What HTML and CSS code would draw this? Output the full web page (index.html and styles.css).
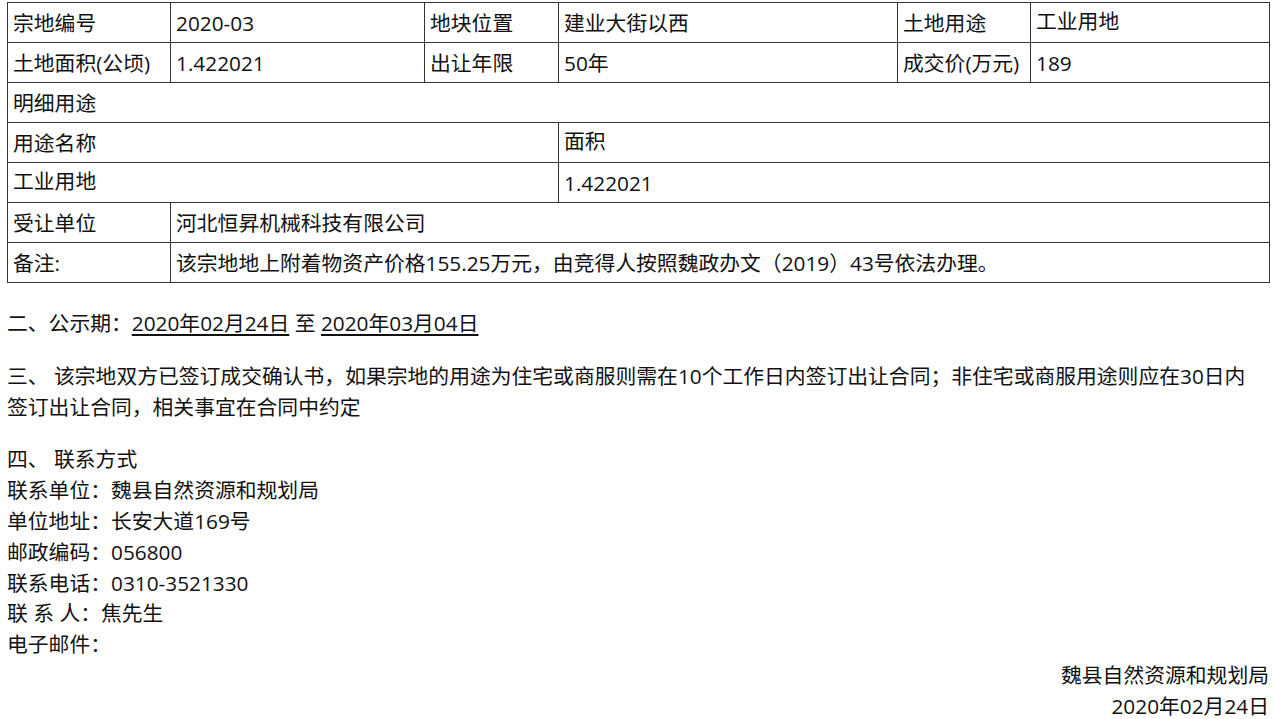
FILE: index.html
```html
<!DOCTYPE html>
<html lang="zh-CN">
<head>
<meta charset="utf-8">
<title>出让结果公示</title>
<link rel="stylesheet" href="styles.css">
</head>
<body>
<div class="page">
  <table class="land">
    <colgroup>
      <col class="c1"><col class="c2"><col class="c3"><col class="c4"><col class="c5"><col class="c6">
    </colgroup>
    <tr>
      <td>宗地编号</td><td>2020-03</td><td>地块位置</td><td>建业大街以西</td><td>土地用途</td><td class="up">工业用地</td>
    </tr>
    <tr>
      <td>土地面积(公顷)</td><td>1.422021</td><td>出让年限</td><td>50年</td><td>成交价(万元)</td><td>189</td>
    </tr>
    <tr>
      <td colspan="6">明细用途</td>
    </tr>
    <tr>
      <td colspan="3">用途名称</td><td colspan="3" class="up">面积</td>
    </tr>
    <tr>
      <td colspan="3" class="up">工业用地</td><td colspan="3">1.422021</td>
    </tr>
    <tr>
      <td>受让单位</td><td colspan="5">河北恒昇机械科技有限公司</td>
    </tr>
    <tr>
      <td>备注:</td><td colspan="5">该宗地地上附着物资产价格155.25万元，由竞得人按照魏政办文（2019）43号依法办理。</td>
    </tr>
  </table>

  <p class="para first">二、公示期：<span class="u">2020年02月24日</span> 至 <span class="u">2020年03月04日</span></p>

  <p class="para">三、 该宗地双方已签订成交确认书，如果宗地的用途为住宅或商服则需在10个工作日内签订出让合同；非住宅或商服用途则应在30日内<br>签订出让合同，相关事宜在合同中约定</p>

  <div class="para contact">
    <div>四、 联系方式</div>
    <div>联系单位：魏县自然资源和规划局</div>
    <div>单位地址：长安大道169号</div>
    <div>邮政编码：056800</div>
    <div>联系电话：0310-3521330</div>
    <div>联 系 人：焦先生</div>
    <div>电子邮件：</div>
    <div class="sign">魏县自然资源和规划局</div>
    <div class="sign">2020年02月24日</div>
  </div>
</div>
</body>
</html>
```

FILE: styles.css
```css
html, body {
  margin: 0;
  padding: 0;
  background: #fff;
}

body {
  font-family: "Open Sans", "Noto Sans CJK SC", "Noto Sans", sans-serif;
  font-size: 20.8px;
  color: #111;
}

.page {
  padding: 2px 5px 0 7px;
}

.land {
  width: 1263px;
  table-layout: fixed;
  border-collapse: collapse;
  border: 1px solid #333;
}

.land col.c1 { width: 163px; }
.land col.c2 { width: 254px; }
.land col.c3 { width: 134px; }
.land col.c4 { width: 339px; }
.land col.c5 { width: 133px; }
.land col.c6 { width: 239px; }

.land tr {
  height: 40px;
}

.land td {
  border: 1px solid #333;
  padding: 0 5px;
  line-height: 28px;
  vertical-align: middle;
  white-space: nowrap;
  overflow: hidden;
}

.land td.up {
  padding-bottom: 3px;
}

.para {
  margin: 22px 0 0 0;
  line-height: 30.8px;
}

.para.first {
  margin-top: 25px;
}

.u {
  text-decoration: underline;
  text-underline-offset: 3px;
}

.sign {
  text-align: right;
  padding-right: 1px;
}
```
